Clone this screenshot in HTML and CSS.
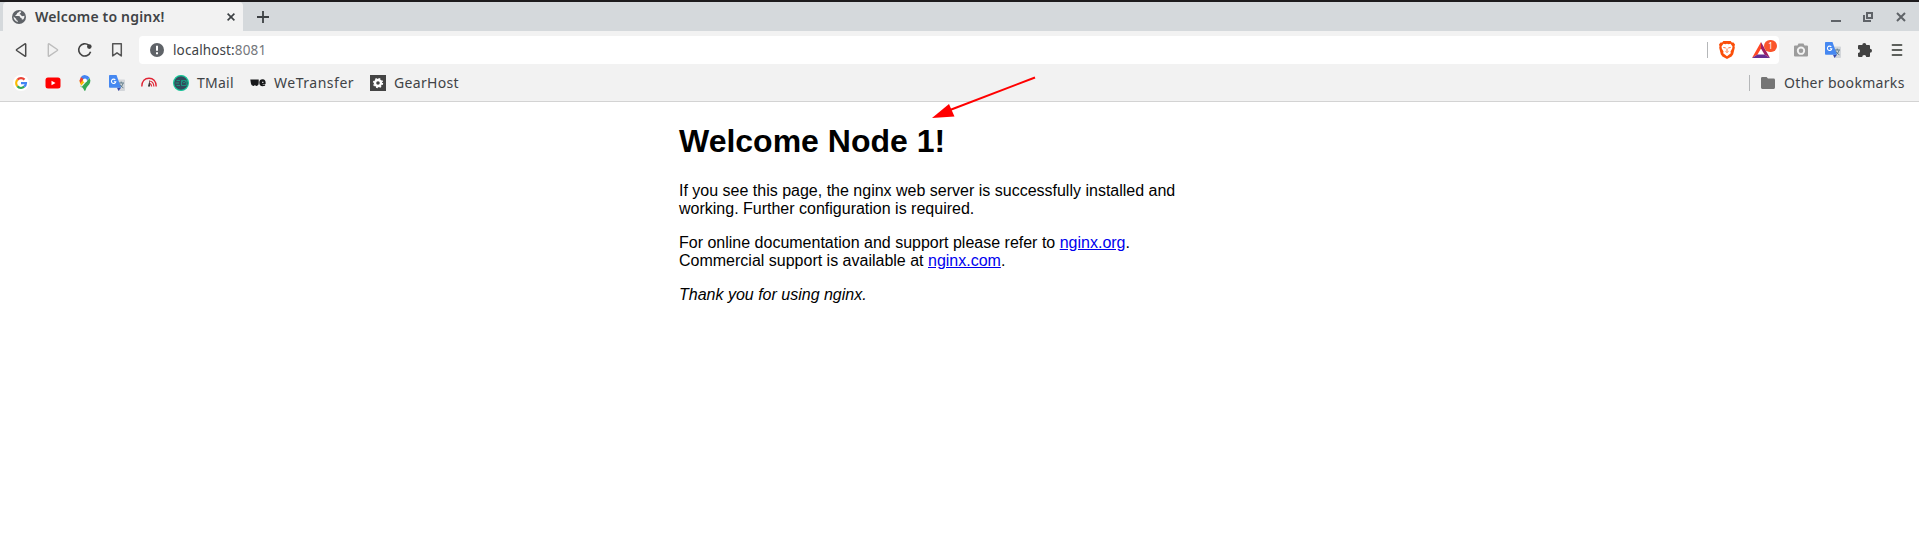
FILE: index.html
```html
<!DOCTYPE html>
<html lang="en">
<head>
<meta charset="utf-8">
<title>Welcome to nginx!</title>
<link rel="stylesheet" href="styles.css">
</head>
<body>
<svg width="0" height="0" class="defs" aria-hidden="true">
  <symbol id="translate" viewBox="0 0 16 16">
    <path d="M6 4.500h9.200a.8.8 0 0 1 .8.800v10a.8.8 0 0 1-.8.700H9.500z" fill="#d3d6da"/>
    <path d="M9.500 8h5.500M12.200 6.600V8M10.400 8.500c.8 2 2 3.300 4 4.300M14 8.300c-.6 2.300-1.800 3.700-3.800 4.700" fill="none" stroke="#607d8b" stroke-width="1"/>
    <path d="M8 12.800h4L9.500 16z" fill="#3949ab"/>
    <path d="M.8 0h6.700l4.500 12.800H.8a.8.8 0 0 1-.8-.8V.8A.8.8 0 0 1 .8 0z" fill="#4688f1"/>
    <path d="M6.300 4.900A2.200 2.200 0 1 0 6.800 6.700H4.900" fill="none" stroke="#fff" stroke-width="1.100"/>
  </symbol>
</svg>
<header class="browser">
  <div class="tabstrip">
    <div class="tab">
      <svg class="globe" width="14" height="14" viewBox="0 0 14 14"><circle cx="7" cy="7" r="7" fill="#5f6368"/><path d="M7.500 1.300c-.2 1.500-2.500 1-2.600 2.500 0 1.300-1.600.8-1.600 2.200h3.200c1.600 0 1.700 1 1.700 1.800 1.200 0 1.700.6 1.600 1.700h1.300c1-1 1.500-2.300 1.300-3.800-1 .2-1.500.8-2.500.4-.9-.4-.5-1.300-1.500-1.500-.8-.2-.9-1.100-.2-1.400.8-.3 1-.9.900-1.700zM1.500 6.500c0 2.800 1.800 5 4.300 5.600v-1.400c-1 0-1.600-.7-1.500-1.700z" fill="#f2f2f2"/></svg>
      <span class="tab-title">Welcome to nginx!</span>
      <svg class="tab-close" width="8" height="8" viewBox="0 0 8 8"><path d="M.6.600l6.800 6.800M7.400.6L.6 7.400" stroke="#3c4043" stroke-width="1.600"/></svg>
    </div>
    <svg class="plus" width="12" height="12" viewBox="0 0 12 12"><path d="M6 0v12M0 6h12" stroke="#3c4043" stroke-width="1.800"/></svg>
    <div class="window-controls">
      <svg width="10" height="12" viewBox="0 0 10 12"><path d="M0 10h10" stroke="#5f6368" stroke-width="2"/></svg>
      <svg width="10" height="10" viewBox="0 0 10 10"><path d="M4 1h5v5H4zM1 3v6h7" fill="none" stroke="#5f6368" stroke-width="2"/></svg>
      <svg width="10" height="10" viewBox="0 0 10 10"><path d="M1 1l8 8M9 1L1 9" stroke="#5f6368" stroke-width="2"/></svg>
    </div>
  </div>
  <div class="toolbar">
    <nav class="nav">
      <svg width="16" height="16" viewBox="0 0 16 16"><path d="M12.700 2.300v11.400q0 .8-.8.400L3.700 8.500q-.6-.5 0-1l8.200-5.600q.8-.4.8.4z" fill="none" stroke="#4a4a4a" stroke-width="1.500"/></svg>
      <svg width="16" height="16" viewBox="0 0 16 16"><path d="M3.300 2.300v11.400q0 .8.800.4l8.200-5.600q.6-.5 0-1L4.100 1.900q-.8-.4-.8.400z" fill="none" stroke="#bdbdbd" stroke-width="1.400"/></svg>
      <svg width="16" height="16" viewBox="0 0 16 16"><path d="M11.700 3.200A6.100 6.100 0 1 0 13.600 9.800" fill="none" stroke="#424242" stroke-width="1.600"/><circle cx="12.300" cy="4.600" r="2.300" fill="#424242"/></svg>
      <svg width="16" height="16" viewBox="0 0 16 16"><path d="M3.700 1.700h8.600v12.200L8 10.800l-4.300 3.100z" fill="none" stroke="#555" stroke-width="1.500" stroke-linejoin="round"/></svg>
    </nav>
    <div class="address">
      <svg width="14" height="14" viewBox="0 0 14 14"><circle cx="7" cy="7" r="7" fill="#5f6368"/><path d="M7 2.800v5M7 9.300v2" stroke="#fff" stroke-width="2"/></svg>
      <span class="url">localhost:<span class="port">8081</span></span>
      <span class="separator"></span>
      <svg class="brave" width="16" height="18" viewBox="0 0 16 18"><path d="M4.400 0h7.200l1.300 1.500 1.600-.1 1.500 2-.5 1.800.3 1.500-1.600 6.500-1.600 2.400L8 18l-4.600-2.400-1.600-2.400L.2 6.700.5 5.200 0 3.400l1.500-2 1.600.1z" fill="#fb4f0a"/><path d="M4.500 2.700l1.800.5L8 2.800l1.700.4 1.800-.5 2 2.700-.3 2-1.700 3.100.3 1.800L8 15.200l-3.800-2.900.3-1.800-1.700-3.100-.3-2z" fill="#fff"/><path d="M4.300 6.400l2.500.6M11.700 6.400l-2.500.6M8 7.500v2.800M6.500 10.400L8 11.400l1.500-1" fill="none" stroke="#fb4f0a" stroke-width=".8"/></svg>
      <div class="rewards">
        <svg width="18" height="16" viewBox="0 0 18 16"><path d="M9 0L0 16l5.500-3.500L9 6.500z" fill="#ff4724"/><path d="M9 0l9 16-5.500-3.500L9 6.500z" fill="#9e1f63"/><path d="M0 16h18l-5.500-3.500h-7z" fill="#662d91"/></svg>
        <span class="badge">1</span>
      </div>
    </div>
    <div class="extensions">
      <svg width="16" height="16" viewBox="0 0 16 16"><path d="M5.500 1.500h5l1 2H14q1 0 1 1v9q0 1-1 1H2q-1 0-1-1v-9q0-1 1-1h2.500z" fill="#9c9c9c"/><circle cx="8" cy="8.700" r="3.200" fill="none" stroke="#f2f2f2" stroke-width="1.900"/></svg>
      <svg width="16" height="16"><use href="#translate"/></svg>
      <svg width="16" height="16" viewBox="0 0 16 16"><path d="M2 3h3.300a2 2 0 0 1 4 0H12a1 1 0 0 1 1 1v2.800a2 2 0 0 1 0 4V14a1 1 0 0 1-1 1H9.200a2 2 0 0 0-4 0H2a1 1 0 0 1-1-1v-3a2 2 0 0 0 0-4V4a1 1 0 0 1 1-1z" fill="#424242"/></svg>
      <svg width="16" height="16" viewBox="0 0 16 16"><path d="M3.500 3h9M3.500 8h9M3.500 13h9" stroke="#5d605c" stroke-width="1.800" stroke-linecap="round"/></svg>
    </div>
  </div>
  <div class="bookmarks">
    <svg width="16" height="16" viewBox="0 0 16 16"><circle cx="8" cy="8" r="8" fill="#fff"/><g fill="none" stroke-width="2.300"><path d="M4.500 4.700a4.800 4.800 0 0 1 7-.1" stroke="#ea4335"/><path d="M4.400 11.200a4.900 4.900 0 0 1 .1-6.500" stroke="#fbbc05"/><path d="M11.200 11.700a4.900 4.900 0 0 1-6.800-.5" stroke="#34a853"/><path d="M8 8.200h4.900a4.800 4.800 0 0 1-1.700 3.500" stroke="#4285f4"/></g></svg>
    <svg width="16" height="16" viewBox="0 0 16 16"><rect x=".5" y="2.500" width="15" height="11" rx="2.500" fill="#f00"/><path d="M6.500 5.700v4.600l4-2.300z" fill="#fff"/></svg>
    <svg width="16" height="16" viewBox="0 0 16 16"><path d="M8 16c.6 0 .8-2.300 2-4 1.200-1.700 3.400-3.200 3.400-6.600L12.600 3 4.200 12.500 2.900 10c1.400 2 3.200 2.500 4.200 5 .2.600.4 1 .9 1z" fill="#34a853"/><path d="M2.600 5.500c0 2.300.8 3.800 1.800 5l5.200-6z" fill="#fbbc04"/><path d="M3.900 2L2.600 5.600l.6 2.600 5-6z" fill="#ea4335"/><path d="M3.900 2A5.400 5.400 0 0 1 12.600 2.700L9.500 6.300 6.500 3.900z" fill="#4285f4"/><circle cx="8" cy="5.400" r="1.900" fill="#fff"/></svg>
    <svg width="16" height="16"><use href="#translate"/></svg>
    <svg width="16" height="16" viewBox="0 0 16 16"><g fill="none" stroke="#e02434"><path d="M.8 11.500C.8 6 4 3.200 8 3.200s7.200 2.800 7.200 8.300" stroke-width="1.400"/><path d="M8 6c3 0 4.700 2.200 4.900 5.500M8.500 8.300c1.300.4 2 1.700 2.100 3.200" stroke-width="1.200"/></g><path d="M8.600 5L7 11.500h2z" fill="#222"/></svg>
    <a class="bookmark tmail"><svg width="16" height="16" viewBox="0 0 16 16"><circle cx="8" cy="8" r="7.400" fill="#344b5c" stroke="#16c79a" stroke-width="1.200"/><path d="M3.500 5.500H7M2.500 8H6M3.500 10.500H7M8.500 5.500h4.800v5H8.500zM8.800 6l2.100 2L13 6" fill="none" stroke="#16a886" stroke-width=".8"/></svg><span>TMail</span></a>
    <a class="bookmark wetransfer"><svg width="16" height="16" viewBox="0 0 16 16"><path d="M.3 4.500h8.400v3.800q0 2.700-2 2.700-1 0-1.800-1-.7 1-1.700 1-2 0-2.300-2.700z" fill="#17181a"/><path d="M15.600 8.900h-3.200q.5 1 2.700.4v1.500q-5.800 1.500-5.800-3.100 0-3.400 3.300-3.400 3.400 0 3 4.600z" fill="#17181a"/><path d="M12 7.300h1.500" stroke="#f2f2f2" stroke-width="1"/></svg><span>WeTransfer</span></a>
    <a class="bookmark gearhost"><svg width="16" height="16" viewBox="0 0 16 16"><path d="M0 0h16v16H0z" fill="#444"/><circle cx="8" cy="8" r="3" fill="none" stroke="#fff" stroke-width="2.400"/><circle cx="8" cy="8" r="4.500" fill="none" stroke="#fff" stroke-width="1.300" stroke-dasharray="1.767"/></svg><span>GearHost</span></a>
    <div class="other"><span class="separator"></span><svg width="14" height="12" viewBox="0 0 14 12"><path d="M1.300 0h4.300L7 1.600h5.700Q14 1.600 14 3v7.600Q14 12 12.700 12H1.300Q0 12 0 10.600V1.300Q0 0 1.300 0z" fill="#757575"/></svg><span class="other-text">Other bookmarks</span></div>
  </div>
</header>
<main class="page">
  <h1>Welcome Node 1!</h1>
  <p>If you see this page, the nginx web server is successfully installed and<br>working. Further configuration is required.</p>
  <p>For online documentation and support please refer to <a href="#">nginx.org</a>.<br>Commercial support is available at <a href="#">nginx.com</a>.</p>
  <p><em>Thank you for using nginx.</em></p>
</main>
<svg class="arrow" width="106" height="46" viewBox="0 0 106 46"><path d="M103 3.500L18 36" stroke="#f00" stroke-width="2"/><path d="M0 44l17-14 5.500 12.600z" fill="#f00"/></svg>
</body>
</html>
```
FILE: styles.css
```css
* { box-sizing: border-box; }
body { margin: 0; background: #fff; font-family: "Liberation Sans", Arial, sans-serif; font-size: 16px; height: 549px; overflow: hidden; }
svg { display: block; flex: none; }
.defs { position: absolute; }
.browser { height: 102px; border-top: 2px solid #1d1b1d; border-bottom: 1px solid #d3d3d3; background: #f2f2f2; font-family: "Noto Sans", sans-serif; color: #404346; font-size: 14px; white-space: nowrap; }
.tabstrip { display: flex; align-items: center; height: 29px; background: #d5d9dc; padding: 0 13px 0 3px; }
.tab { display: flex; align-items: center; width: 240px; height: 29px; padding: 0 8px 0 9px; background: #f2f2f2; border-radius: 4px 4px 0 0; }
.tab-title { margin-left: 9px; font-size: 14px; font-weight: 600; letter-spacing: 0.18px; }
.tab-close { margin-left: auto; }
.plus { margin-left: 14px; }
.window-controls { display: flex; align-items: center; gap: 22px; margin-left: auto; }
.window-controls svg:nth-child(2) { margin-right: 1px; }
.toolbar { display: flex; align-items: center; height: 38px; padding-left: 13px; }
.nav { display: flex; gap: 16px; width: 126px; }
.address { display: flex; align-items: center; width: 1640px; height: 28px; padding-left: 11px; background: #fff; border-radius: 4px; }
.url { margin-left: 9px; font-size: 13.5px; letter-spacing: 0.12px; }
.port { color: #74777b; }
.separator { width: 1px; height: 16px; background: #b5b7b9; }
.address .separator { margin-left: auto; }
.brave { margin-left: 11px; }
.rewards { position: relative; margin: 0 9px 0 17px; }
.badge { position: absolute; left: 13px; top: -2px; width: 12px; height: 12px; border-radius: 6px; background: #fb542b; color: #fff; font-size: 8px; line-height: 12px; text-align: center; }
.extensions { display: flex; gap: 16px; margin-left: 14px; }
.bookmarks { display: flex; align-items: center; gap: 16px; height: 28px; padding: 0 15px 0 13px; }
.bookmark { display: flex; align-items: center; }
.bookmark span, .other-text { padding-bottom: 2px; letter-spacing: 0.32px; }
.bookmark span { margin-left: 8px; }
.bookmark.tmail { width: 45px; margin-right: 16px; }
.tmail span { letter-spacing: 0.25px; }
.bookmark.wetransfer { width: 104px; }
.wetransfer span { letter-spacing: 0.52px; }
.other { display: flex; align-items: center; margin-left: auto; }
.other svg { margin-left: 11px; }
.other-text { width: 120px; margin-left: 9px; }
.page { width: 561px; margin: 0 auto; padding-top: 21px; color: #000; }
h1 { margin: 0 0 22px; font-size: 32px; line-height: 37px; }
p { margin: 0 0 16px; line-height: 18px; }
.page a { color: #00e; }
.rewards .badge { left: 12px; width: 13px; }
.arrow { position: absolute; left: 932px; top: 74px; }
```
